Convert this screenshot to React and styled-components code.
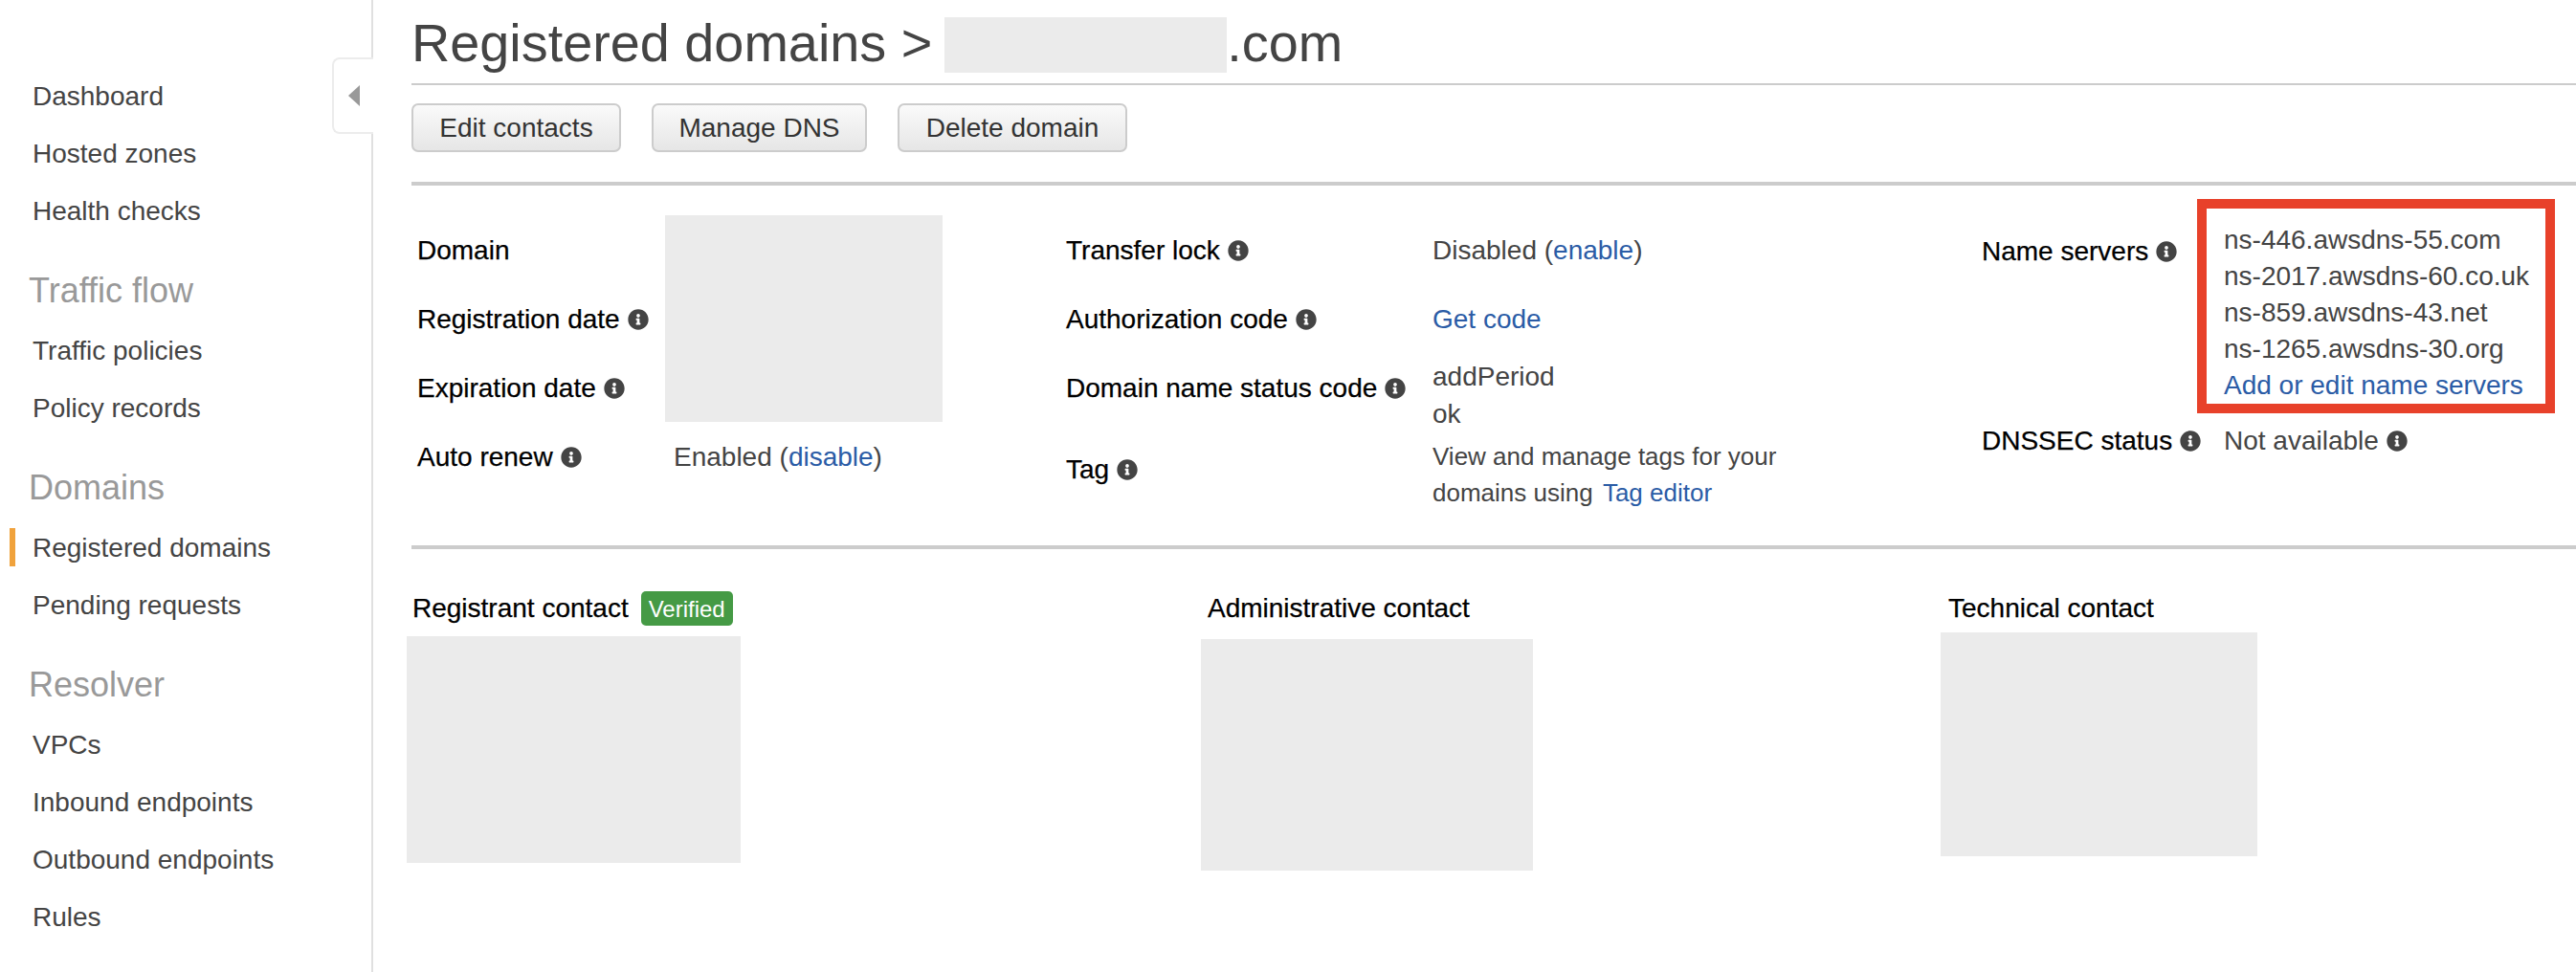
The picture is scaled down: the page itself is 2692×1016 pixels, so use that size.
import React from 'react';
import styled, { createGlobalStyle } from 'styled-components';
import { FaInfoCircle } from 'react-icons/fa';

const GlobalStyle = createGlobalStyle`
  html, body {
    margin: 0;
    background: white;
    font-family: "Liberation Sans", Arial, sans-serif;
    font-size: 28px;
    color: #444;
  }
`;

const Page = styled.div`
  display: flex;
  min-height: 100vh;
  overflow: hidden;
`;

const Sidebar = styled.nav`
  position: relative;
  flex: 0 0 390px;
  box-sizing: border-box;
  padding-top: 70px;
  border-right: 2px solid #e0e0e0;
`;

const CollapseTab = styled.div`
  position: absolute;
  top: 60px;
  right: -2px;
  box-sizing: border-box;
  width: 43px;
  height: 80px;
  display: flex;
  align-items: center;
  padding-left: 15px;
  background: white;
  border: 2px solid #ececec;
  border-right: none;
  border-radius: 8px 0 0 8px;
`;

const Arrow = styled.span`
  width: 0;
  height: 0;
  border-top: 11px solid transparent;
  border-bottom: 11px solid transparent;
  border-right: 12px solid #999;
`;

const NavGroup = styled.div`
  display: flex;
  flex-direction: column;
`;

const NavHeading = styled.div`
  padding: 22px 0 0 30px;
  font-size: 36px;
  line-height: 64px;
  color: #999;
`;

const NavItem = styled.a`
  display: block;
  margin: 10px 0 10px 10px;
  padding: 2px 0 0 18px;
  line-height: 38px;
  border-left: 6px solid ${(p) => (p.$active ? '#f0a23c' : 'transparent')};
  color: #444;
`;

const Main = styled.main`
  flex: 1;
  min-width: 0;
  padding-left: 40px;
`;

const TitleBar = styled.div`
  display: flex;
  align-items: center;
  height: 89px;
  padding-top: 2px;
  box-sizing: border-box;
  border-bottom: 2px solid #ccc;
  font-size: 55.8px;
  color: #444;
`;

const TitleMask = styled.span`
  width: 295px;
  height: 58px;
  margin: 4px 0 0 13px;
  background: #ebebeb;
`;

const Toolbar = styled.div`
  display: flex;
  gap: 32px;
  height: 105px;
  padding-top: 19px;
  box-sizing: border-box;
  border-bottom: 4px solid #ccc;
`;

const Button = styled.button`
  height: 51px;
  width: ${(p) => p.$width}px;
  padding: 0;
  border: 2px solid #ccc;
  border-radius: 7px;
  background: linear-gradient(#fafafa, #e6e6e6);
  font: inherit;
  color: #333;
`;

const Details = styled.section`
  display: grid;
  grid-template-columns: 678px 957px 1fr;
  height: 376px;
  padding-left: 6px;
  border-bottom: 4px solid #ccc;
`;

const FieldGrid = styled.div`
  display: grid;
  grid-template-columns: ${(p) => p.$label}px 1fr;
  grid-template-rows: ${(p) => p.$rows};
  align-items: ${(p) => p.$align || 'center'};
  align-content: start;
  padding-top: ${(p) => p.$top}px;
`;

const Label = styled.div`
  grid-column: 1;
  display: flex;
  align-items: center;
  gap: 8px;
  height: 38px;
  margin-top: ${(p) => p.$top || 0}px;
  color: #000;
  -webkit-text-stroke: 0.25px #000;
  white-space: nowrap;
`;

const Value = styled.div`
  font-size: ${(p) => p.$size || 28}px;
  line-height: ${(p) => p.$line || 38}px;
  margin-top: ${(p) => p.$top || 0}px;
  padding-left: ${(p) => p.$left || 0}px;
  white-space: nowrap;
`;

const StatusValue = styled(Value)`
  display: flex;
  align-items: center;
  gap: 8px;
`;

const Link = styled.a`
  color: #2b5ca6;
`;

const TagLink = styled(Link)`
  margin-left: 3px;
`;

const Mask = styled.div`
  grid-column: 2;
  grid-row: 1 / span 3;
  align-self: start;
  width: 290px;
  height: 216px;
  margin-top: -1px;
  margin-left: -9px;
  background: #ebebeb;
`;

const InfoIcon = styled(FaInfoCircle)`
  width: 22px;
  height: 22px;
  flex: none;
  color: #444;
  -webkit-text-stroke: 0;
`;

const HighlightBox = styled.div`
  box-sizing: border-box;
  width: 374px;
  height: 224px;
  padding: 14px 0 0 18px;
  border: 10px solid #e8412a;
  line-height: 38px;
  white-space: nowrap;
`;

const Contacts = styled.section`
  display: grid;
  grid-template-columns: 830px 773px 1fr;
  margin-left: -5px;
  padding-top: 44px;
`;

const ContactHead = styled.div`
  display: flex;
  align-items: center;
  gap: 13px;
  height: 36px;
  padding-left: ${(p) => p.$indent}px;
  color: #000;
  -webkit-text-stroke: 0.25px #000;
`;

const Badge = styled.span`
  width: 96px;
  height: 36px;
  line-height: 37px;
  text-align: center;
  border-radius: 5px;
  background: #459a45;
  color: white;
  -webkit-text-stroke: 0;
  font-size: 24px;
`;

const ContactMask = styled.div`
  width: ${(p) => p.$w}px;
  height: ${(p) => p.$h}px;
  margin-top: ${(p) => p.$top}px;
  background: #ebebeb;
`;

const Field = ({ children, top }) => (
  <Label $top={top}>
    {children}
    <InfoIcon />
  </Label>
);

const navGroups = [
  { items: ['Dashboard', 'Hosted zones', 'Health checks'] },
  { title: 'Traffic flow', items: ['Traffic policies', 'Policy records'] },
  { title: 'Domains', items: ['Registered domains', 'Pending requests'] },
  { title: 'Resolver', items: ['VPCs', 'Inbound endpoints', 'Outbound endpoints', 'Rules'] },
];

const App = () => (
  <>
    <GlobalStyle />
    <Page>
      <Sidebar>
        <CollapseTab><Arrow /></CollapseTab>
        {navGroups.map((group, i) => (
          <NavGroup key={i}>
            {group.title && <NavHeading>{group.title}</NavHeading>}
            {group.items.map((item) => (
              <NavItem key={item} $active={item === 'Registered domains'}>{item}</NavItem>
            ))}
          </NavGroup>
        ))}
      </Sidebar>
      <Main>
        <TitleBar>
          Registered domains &gt;
          <TitleMask />
          .com
        </TitleBar>
        <Toolbar>
          <Button $width={219}>Edit contacts</Button>
          <Button $width={225}>Manage DNS</Button>
          <Button $width={240}>Delete domain</Button>
        </Toolbar>
        <Details>
          <FieldGrid $label={268} $rows="72px 72px 72px 72px" $top={32}>
            <Label>Domain</Label>
            <Mask />
            <Field>Registration date</Field>
            <Field>Expiration date</Field>
            <Field>Auto renew</Field>
            <Value>Enabled (<Link>disable</Link>)</Value>
          </FieldGrid>
          <FieldGrid $label={383} $rows="72px 72px 72px 98px" $top={32}>
            <Field>Transfer lock</Field>
            <Value>Disabled (<Link>enable</Link>)</Value>
            <Field>Authorization code</Field>
            <Value><Link>Get code</Link></Value>
            <Field>Domain name status code</Field>
            <Value $top={14} $line={39}>addPeriod<br />ok</Value>
            <Field>Tag</Field>
            <Value $top={10} $size={26}>View and manage tags for your<br />domains using <TagLink>Tag editor</TagLink></Value>
          </FieldGrid>
          <FieldGrid $label={225} $rows="224px auto" $top={14} $align="start">
            <Field top={36}>Name servers</Field>
            <HighlightBox>
              ns-446.awsdns-55.com<br />
              ns-2017.awsdns-60.co.uk<br />
              ns-859.awsdns-43.net<br />
              ns-1265.awsdns-30.org<br />
              <Link>Add or edit name servers</Link>
            </HighlightBox>
            <Field top={10}>DNSSEC status</Field>
            <StatusValue $top={10} $left={28}>Not available <InfoIcon /></StatusValue>
          </FieldGrid>
        </Details>
        <Contacts>
          <div>
            <ContactHead $indent={6}>Registrant contact <Badge>Verified</Badge></ContactHead>
            <ContactMask $w={349} $h={237} $top={11} />
          </div>
          <div>
            <ContactHead $indent={7}>Administrative contact</ContactHead>
            <ContactMask $w={347} $h={242} $top={14} />
          </div>
          <div>
            <ContactHead $indent={8}>Technical contact</ContactHead>
            <ContactMask $w={331} $h={234} $top={7} />
          </div>
        </Contacts>
      </Main>
    </Page>
  </>
);

export default App;
